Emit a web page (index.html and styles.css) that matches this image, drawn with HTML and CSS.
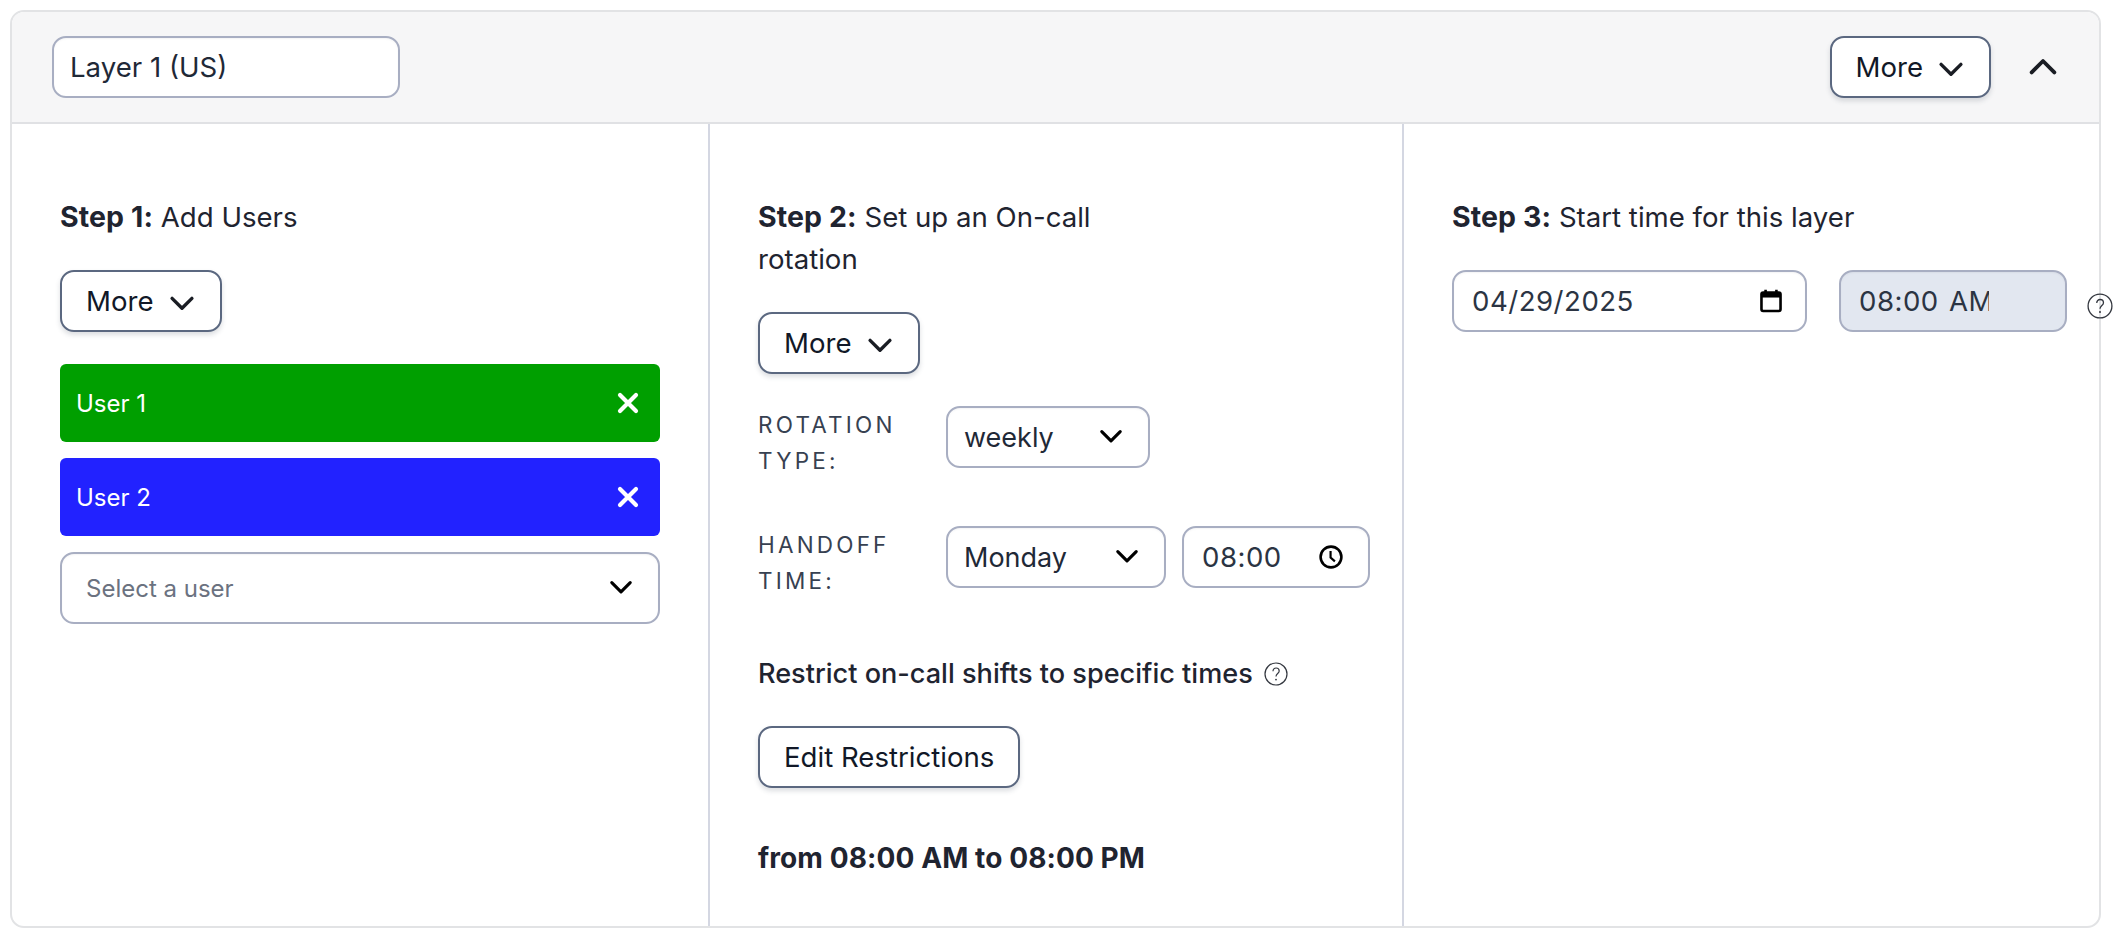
FILE: index.html
```html
<!DOCTYPE html>
<html lang="en">
<head>
<meta charset="utf-8">
<title>Layer 1 (US)</title>
<link rel="stylesheet" href="styles.css">
</head>
<body>
<svg class="defs" width="0" height="0" aria-hidden="true">
  <symbol id="chev" viewBox="0 0 24 24"><path d="M3.5 8 12 16.5 20.5 8" fill="none" stroke="currentColor" stroke-width="2.9" stroke-linecap="round" stroke-linejoin="round"/></symbol>
  <symbol id="x" viewBox="0 0 24 24"><path d="M4 4 20 20M20 4 4 20" fill="none" stroke="currentColor" stroke-width="4.2" stroke-linecap="round"/></symbol>
  <symbol id="help" viewBox="0 0 24 24"><circle cx="12" cy="12" r="11" fill="none" stroke="currentColor" stroke-width="1.2"/><path d="M9 9.2c0-2 1.3-3.2 3.1-3.2s3.1 1.2 3.1 2.9c0 2.6-3.2 2.7-3.2 5.7" fill="none" stroke="currentColor" stroke-width="1.2"/><circle cx="12" cy="17.6" r=".9" fill="currentColor"/></symbol>
</svg>
<main class="card">
  <header class="head">
    <input class="field name" type="text" value="Layer 1 (US)">
    <div class="head-actions">
      <button class="btn" type="button">More<svg class="ic-btn"><use href="#chev"/></svg></button>
      <svg class="ic-up"><use href="#chev"/></svg>
    </div>
  </header>
  <div class="cols">
    <section class="col">
      <p class="step"><b>Step 1:</b> Add Users</p>
      <button class="btn" type="button">More<svg class="ic-btn"><use href="#chev"/></svg></button>
      <div class="user green"><span>User 1</span><svg class="ic-x"><use href="#x"/></svg></div>
      <div class="user blue"><span>User 2</span><svg class="ic-x"><use href="#x"/></svg></div>
      <div class="field pick"><span>Select a user</span><svg class="ic-sel"><use href="#chev"/></svg></div>
    </section>
    <section class="col">
      <p class="step narrow"><b>Step 2:</b> Set up an On-call rotation</p>
      <button class="btn" type="button">More<svg class="ic-btn"><use href="#chev"/></svg></button>
      <div class="row first">
        <div class="lab">Rotation type:</div>
        <div class="field sel weekly"><span>weekly</span><svg class="ic-sel"><use href="#chev"/></svg></div>
      </div>
      <div class="row second">
        <div class="lab">Handoff time:</div>
        <div class="field sel monday"><span>Monday</span><svg class="ic-sel"><use href="#chev"/></svg></div>
        <div class="field clock"><span class="mono">08:00</span>
          <svg class="ic-clock" viewBox="0 0 24 24"><circle cx="12" cy="12" r="9.6" fill="none" stroke="currentColor" stroke-width="2.4"/><path d="M11.6 6.5V12.4L15.6 16" fill="none" stroke="currentColor" stroke-width="2"/></svg>
        </div>
      </div>
      <p class="restrict">Restrict on-call shifts to specific times<svg class="ic-help"><use href="#help"/></svg></p>
      <button class="btn" type="button">Edit Restrictions</button>
      <p class="range">from 08:00 AM to 08:00 PM</p>
    </section>
    <section class="col last">
      <p class="step"><b>Step 3:</b> Start time for this layer</p>
      <div class="row start">
        <div class="field date"><span class="mono">04/29/2025</span>
          <svg class="ic-cal" viewBox="0 0 24 24"><path d="M7 1.5v3M17 1.5v3" stroke="currentColor" stroke-width="2.4" fill="none"/><rect x="3.2" y="4.2" width="17.6" height="17" rx="1.6" fill="none" stroke="currentColor" stroke-width="2.4"/><rect x="3.2" y="4.2" width="17.6" height="4.6" fill="currentColor"/></svg>
        </div>
        <div class="field time"><span class="mono clip">08:00 AM</span></div>
        <svg class="ic-help side"><use href="#help"/></svg>
      </div>
    </section>
  </div>
</main>
</body>
</html>
```

FILE: styles.css
```css
* { box-sizing: border-box; }
html, body { height: 100%; }
body {
  margin: 0;
  padding: 10px 21px 12px 10px;
  background: #fff;
  color: #1f2430;
  font-family: Inter, "Liberation Sans", sans-serif;
  font-size: 27.6px;
  line-height: 42px;
  overflow: hidden;
}
.defs { position: absolute; }
p { margin: 0; }
b { font-size: 28.5px; letter-spacing: .1px; }
.card {
  height: 918px;
  border: 2px solid #e2e3e5;
  border-radius: 14px;
  display: flex;
  flex-direction: column;
}
.head {
  flex: none;
  height: 112px;
  padding: 24px 40px 0 40px;
  background: #f6f6f7;
  border-bottom: 2px solid #e0e1e4;
  border-radius: 12px 12px 0 0;
  display: flex;
  justify-content: space-between;
  align-items: flex-start;
}
.head-actions { display: flex; align-items: center; gap: 36px; }
.field {
  height: 62px;
  border: 2px solid #a8aec2;
  border-radius: 14px;
  background: #fff;
  font: inherit;
  color: #1f2937;
  display: flex;
  align-items: center;
  box-shadow: inset 0 1px 2px rgba(60, 70, 90, .06);
}
.name { width: 348px; padding: 0 16px; outline: none; }
.btn {
  height: 62px;
  padding: 0 24px;
  border: 2px solid #5b6880;
  border-radius: 14px;
  background: #fff;
  color: #111827;
  font: inherit;
  display: inline-flex;
  align-items: center;
  align-self: flex-start;
  box-shadow: 0 3px 5px rgba(60, 70, 90, .18);
}
.ic-btn { width: 28px; height: 28px; margin-left: 14px; margin-top: 3px; color: #1a1d24; }
.ic-up { width: 32px; height: 32px; transform: rotate(180deg); color: #1a1d24; }
.cols { flex: 1; display: grid; grid-template-columns: 698px 694px 1fr; }
.col {
  padding: 72px 0 0 48px;
  border-right: 2px solid #d4d7e2;
  display: flex;
  flex-direction: column;
  align-items: stretch;
  min-width: 0;
}
.last { border-right: 0; }
.step { margin-bottom: 32px; }
.narrow { max-width: 380px; }
.user {
  height: 78px;
  margin-top: 16px;
  padding: 2px 20px 0 16px;
  margin-right: 48px;
  border-radius: 6px;
  color: #fff;
  font-size: 24px;
  display: flex;
  align-items: center;
  justify-content: space-between;
}
.btn + .user { margin-top: 32px; }
.green { background: #009f00; }
.blue { background: #2222ff; }
.ic-x { width: 24px; height: 24px; margin-top: -2px; }
.pick {
  height: 72px;
  margin-top: 16px;
  margin-right: 48px;
  padding: 2px 24px 0 24px;
  justify-content: space-between;
  font-size: 24px;
  color: #6b7280;
}
.ic-sel { width: 26px; height: 26px; color: #000; flex: none; margin-top: -5px; }
.row { display: flex; align-items: flex-start; }
.first { margin-top: 32px; }
.second { margin-top: 47px; }
.lab {
  width: 188px;
  flex: none;
  padding-top: 1px;
  font-size: 22.5px;
  line-height: 36px;
  letter-spacing: 3.2px;
  text-transform: uppercase;
  color: #374151;
}
.sel { padding: 2px 24px 0 16px; justify-content: space-between; flex: none; font-size: 27px; }
.weekly { width: 204px; }
.monday { width: 220px; }
.clock { width: 188px; margin-left: 16px; padding: 0 24px 0 18px; justify-content: space-between; flex: none; }
.mono { letter-spacing: .5px; word-spacing: 2px; white-space: pre; color: #2b3443; }
.ic-clock { width: 26px; height: 26px; color: #000; flex: none; }
.restrict { margin-top: 54px; font-weight: 500; font-size: 27.1px; display: flex; align-items: center; }
.ic-help { width: 24px; height: 24px; margin-left: 11px; color: #33373f; flex: none; }
.restrict + .btn { margin-top: 31px; }
.range { margin-top: 49px; font-weight: 700; font-size: 28px; letter-spacing: .1px; }
.start { gap: 32px; }
.date { width: 355px; padding: 0 21px 0 18px; justify-content: space-between; flex: none; }
.ic-cal { width: 26px; height: 26px; color: #000; flex: none; }
.time { width: 228px; padding: 0 0 0 18px; background: #e2e7f0; flex: none; }
.clip { width: 130px; overflow: hidden; }
.side { margin: 23px 0 0 -12px; width: 26px; height: 26px; }
```
